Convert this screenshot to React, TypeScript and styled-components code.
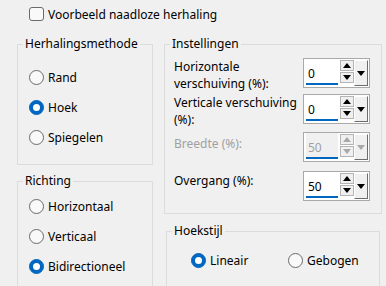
import styled, { createGlobalStyle } from 'styled-components';

const GlobalStyle = createGlobalStyle`
    html, body {
        margin: 0;
        padding: 0;
        background: #f0f0f0;
    }

    body {
        font-family: 'Noto Sans', 'Liberation Sans', sans-serif;
        font-size: 12px;
        color: #000;
    }
`;

type SpinProps = {
    value: string;
    disabled?: boolean;
};

const UpArrow = ({ color }: { color: string }) => (
    <svg width='8' height='5' viewBox='0 0 8 5'>
        <polygon points='0,5 8,5 4,0' fill={color} />
    </svg>
);

const DownArrow = ({ color }: { color: string }) => (
    <svg width='8' height='5' viewBox='0 0 8 5'>
        <polygon points='0,0 8,0 4,5' fill={color} />
    </svg>
);

const Spinner = ({ value, disabled }: SpinProps) => {
    const arrowColor = disabled ? '#a8a8a8' : '#000';

    return (
        <SpinBox>
            <Field $disabled={disabled}>{value}</Field>
            <Steppers>
                <StepButton>
                    <UpArrow color={arrowColor} />
                </StepButton>
                <StepButton>
                    <DownArrow color={arrowColor} />
                </StepButton>
            </Steppers>
            <DropButton>
                <DownArrow color={arrowColor} />
            </DropButton>
        </SpinBox>
    );
};

const Radio = ({ label, checked }: { label: string; checked?: boolean }) => (
    <RadioRow>
        <RadioCircle $checked={checked} />
        <span>{label}</span>
    </RadioRow>
);

const App = () => {
    return (
        <>
            <GlobalStyle />
            <Dialog>
                <CheckRow>
                    <CheckBox />
                    <span>Voorbeeld naadloze herhaling</span>
                </CheckRow>

                <Columns>
                    <Column>
                        <Group $height={129}>
                            <Legend>Herhalingsmethode</Legend>
                            <GroupBody $padTop={10} $padLeft={11}>
                                <Radio label='Rand' />
                                <Radio label='Hoek' checked />
                                <Radio label='Spiegelen' />
                            </GroupBody>
                        </Group>

                        <Group $height={140}>
                            <Legend>Richting</Legend>
                            <GroupBody $padTop={2} $padLeft={11}>
                                <Radio label='Horizontaal' />
                                <Radio label='Verticaal' />
                                <Radio label='Bidirectioneel' checked />
                            </GroupBody>
                        </Group>
                    </Column>

                    <Column $gap={9}>
                        <Group $height={178}>
                            <Legend>Instellingen</Legend>
                            <GroupBody $padTop={6} $padLeft={9}>
                                <SettingsGrid>
                                    <Label>Horizontale verschuiving (%):</Label>
                                    <Spinner value='0' />
                                    <Label>Verticale verschuiving (%):</Label>
                                    <Spinner value='0' />
                                    <Label $offset={3} $disabled>
                                        Breedte (%):
                                    </Label>
                                    <Spinner value='50' disabled />
                                    <Label $offset={1}>Overgang (%):</Label>
                                    <Spinner value='50' />
                                </SettingsGrid>
                            </GroupBody>
                        </Group>

                        <CornerGroup $height={80}>
                            <Legend>Hoekstijl</Legend>
                            <GroupBody $padTop={6} $padLeft={24}>
                                <CornerRow>
                                    <Radio label='Lineair' checked />
                                    <Radio label='Gebogen' />
                                </CornerRow>
                            </GroupBody>
                        </CornerGroup>
                    </Column>
                </Columns>
            </Dialog>
        </>
    );
};

export default App;

const Dialog = styled.div`
    width: 386px;
    height: 286px;
    overflow: hidden;
    box-sizing: border-box;
    padding: 7px 0 0 17px;
    background: #f0f0f0;
`;

const CheckRow = styled.div`
    display: flex;
    align-items: center;
    gap: 4px;
    height: 14px;
    margin-left: 12px;
`;

const CheckBox = styled.div`
    width: 15px;
    height: 14px;
    box-sizing: border-box;
    border: 1px solid #6a6a6a;
    border-radius: 3px;
    background: #f9f9f9;
`;

const Columns = styled.div`
    display: grid;
    grid-template-columns: 136px 218px;
    column-gap: 11px;
    margin-top: 15px;
`;

const Column = styled.div<{ $gap?: number }>`
    display: flex;
    flex-direction: column;
    gap: ${({ $gap }) => $gap ?? 8}px;
`;

const Group = styled.fieldset<{ $height: number }>`
    margin: 0;
    min-width: 0;
    box-sizing: border-box;
    height: ${({ $height }) => $height}px;
    padding: 0;
    border: 1px solid #dcdcdc;
`;

const CornerGroup = styled(Group)`
    margin-left: 2px;
    width: 214px;
`;

const Legend = styled.legend`
    margin-left: 5px;
    padding: 0 2px;
    line-height: 16px;
`;

const GroupBody = styled.div<{ $padTop: number; $padLeft: number }>`
    padding: ${({ $padTop }) => $padTop}px 0 0 ${({ $padLeft }) => $padLeft}px;
`;

const RadioRow = styled.div`
    display: flex;
    align-items: center;
    gap: 4px;
    height: 30px;
`;

const RadioCircle = styled.div<{ $checked?: boolean }>`
    position: relative;
    width: 15px;
    height: 15px;
    box-sizing: border-box;
    border-radius: 50%;
    border: 1px solid ${({ $checked }) => ($checked ? '#0067c0' : '#6a6a6a')};
    background: ${({ $checked }) => ($checked ? '#0067c0' : '#f9f9f9')};

    &::after {
        content: '';
        display: ${({ $checked }) => ($checked ? 'block' : 'none')};
        position: absolute;
        left: 3px;
        top: 3px;
        width: 7px;
        height: 7px;
        border-radius: 50%;
        background: #fff;
    }
`;

const CornerRow = styled.div`
    display: grid;
    grid-template-columns: 97px auto;
`;

const SettingsGrid = styled.div`
    display: grid;
    grid-template-columns: 125px 67px;
    grid-template-rows: 36px 38px 39px 31px;
    column-gap: 4px;
`;

const Label = styled.div<{ $offset?: number; $disabled?: boolean }>`
    line-height: 17px;
    padding-top: ${({ $offset }) => $offset ?? 0}px;
    color: ${({ $disabled }) => ($disabled ? '#a0a0a0' : '#000')};
`;

const SpinBox = styled.div`
    display: flex;
    align-items: flex-start;
    width: 67px;
    height: 30px;
    box-sizing: border-box;
    padding: 0 1px;
    border: 1px solid #a9a9a9;
    background: #fff;
`;

const Field = styled.div<{ $disabled?: boolean }>`
    display: flex;
    align-items: flex-end;
    width: 32px;
    height: 26px;
    box-sizing: border-box;
    margin-left: 1px;
    padding: 0 0 1px 2px;
    line-height: 17px;
    border-bottom: 2px solid #0067c0;
    color: ${({ $disabled }) => ($disabled ? '#a0a0a0' : '#000')};
    background: ${({ $disabled }) => ($disabled ? '#f0f0f0' : '#fff')};
`;

const Steppers = styled.div`
    display: flex;
    flex-direction: column;
    gap: 1px;
    margin: 1px 0 0 2px;
`;

const StepButton = styled.div`
    display: flex;
    align-items: center;
    justify-content: center;
    width: 14px;
    height: 11px;
    box-sizing: border-box;
    border: 1px solid #b4b4b4;
    background: #f0f0f0;
`;

const DropButton = styled.div`
    display: flex;
    align-items: center;
    justify-content: center;
    width: 14px;
    height: 26px;
    margin-top: 1px;
    box-sizing: border-box;
    border-top: 1px solid #fff;
    border-left: 1px solid #fff;
    border-right: 1px solid #6d6d6d;
    border-bottom: 1px solid #6d6d6d;
    background: #f0f0f0;
`;
